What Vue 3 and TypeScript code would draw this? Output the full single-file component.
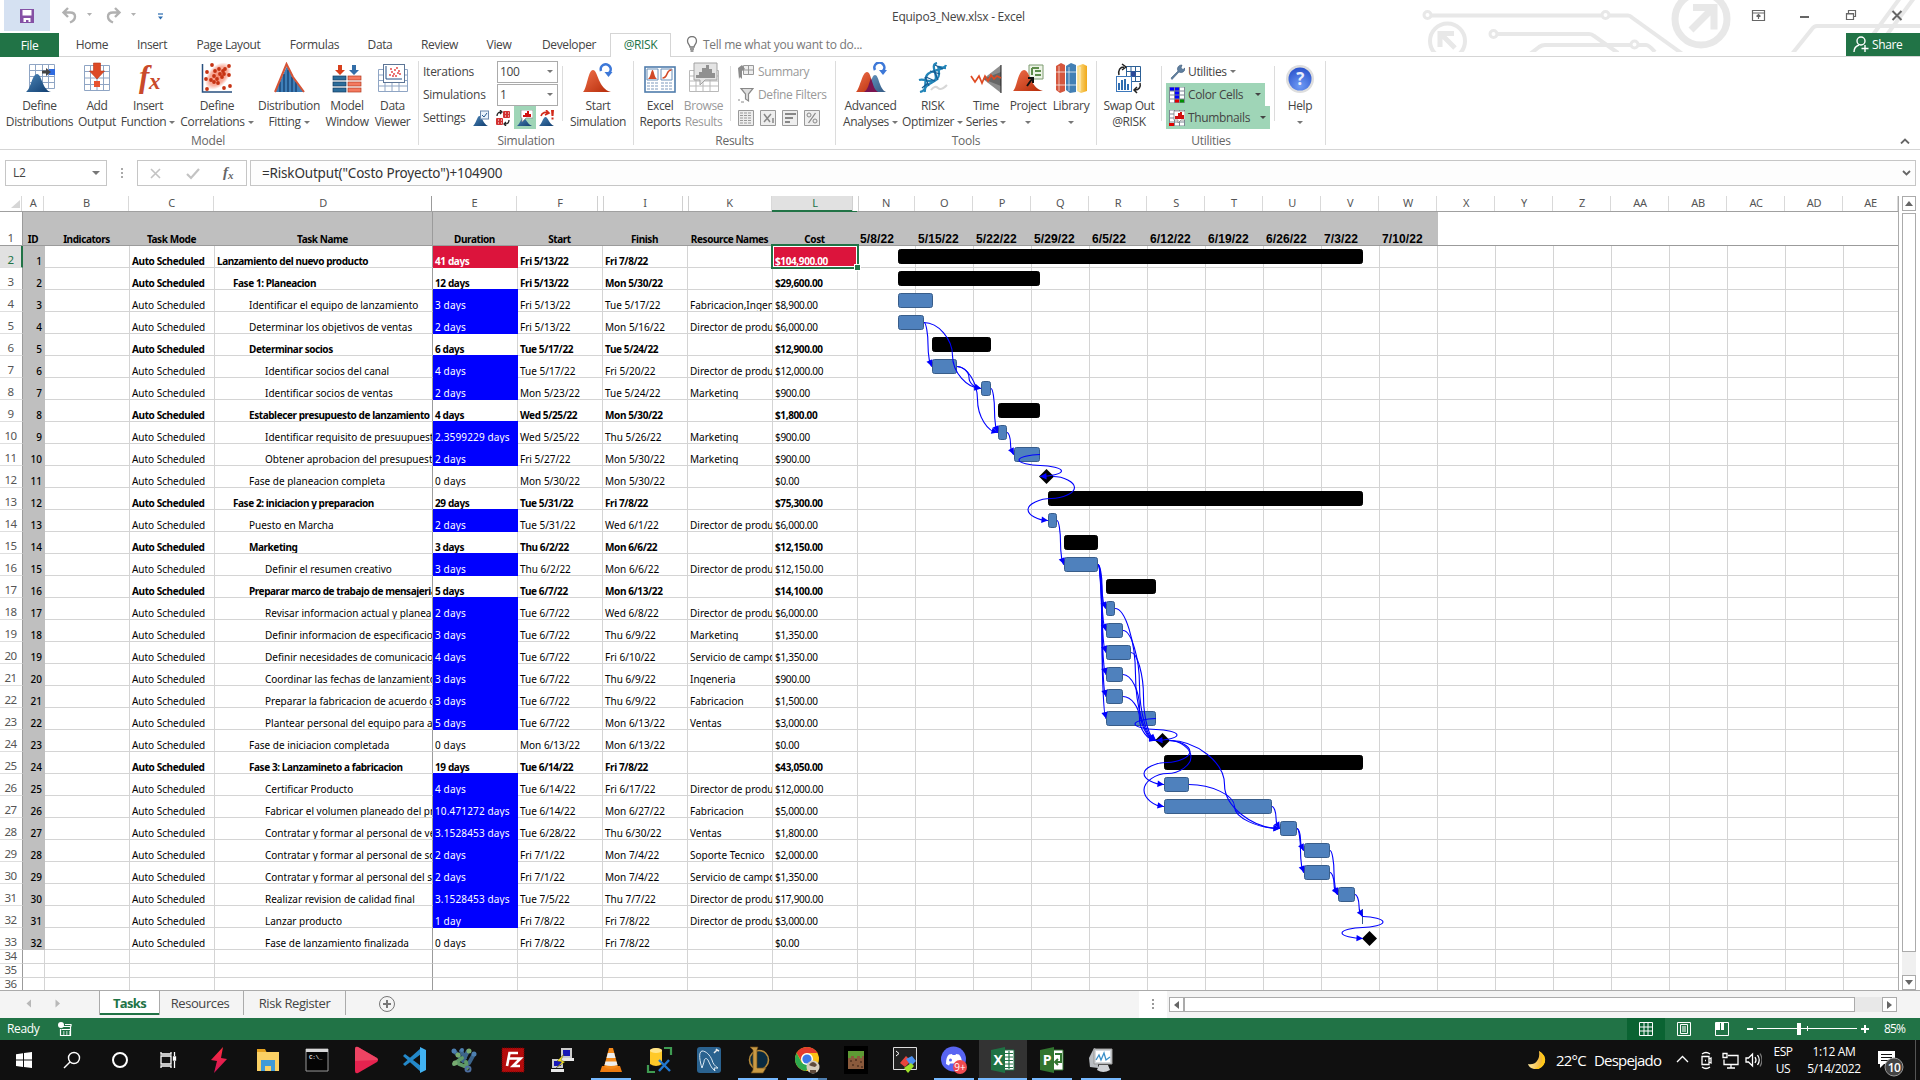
<script setup lang="ts">
type Button = { icon: string; a: string; b?: string; w: number; drop?: boolean; off?: boolean }
type Column = { name: string; w: number; head?: string; date?: boolean; tight?: boolean }
type Task = { level: number; name: string; dur: string; start: string; finish: string; res: string; cost: string; bold?: boolean; fill?: boolean }
type Pt = [number, number]

const tabs = [
  { t: 'Home', w: 66 }, { t: 'Insert', w: 54 }, { t: 'Page Layout', w: 99 }, { t: 'Formulas', w: 73 },
  { t: 'Data', w: 58 }, { t: 'Review', w: 61 }, { t: 'View', w: 58 }, { t: 'Developer', w: 82 },
]

const modelButtons: Button[] = [
  { icon: 'define', a: 'Define', b: 'Distributions', w: 75 },
  { icon: 'output', a: 'Add', b: 'Output', w: 40 },
  { icon: 'fx', a: 'Insert', b: 'Function', w: 62, drop: true },
  { icon: 'corr', a: 'Define', b: 'Correlations', w: 76, drop: true },
  { icon: 'fit', a: 'Distribution', b: 'Fitting', w: 68, drop: true },
  { icon: 'model', a: 'Model', b: 'Window', w: 48 },
  { icon: 'viewer', a: 'Data', b: 'Viewer', w: 43 },
]
const resultButtons: Button[] = [
  { icon: 'reports', a: 'Excel', b: 'Reports', w: 46 },
  { icon: 'browse', a: 'Browse', b: 'Results', w: 41, off: true },
]
const toolButtons: Button[] = [
  { icon: 'advanced', a: 'Advanced', b: 'Analyses', w: 59, drop: true },
  { icon: 'optimizer', a: 'RISK', b: 'Optimizer', w: 65, drop: true },
  { icon: 'series', a: 'Time', b: 'Series', w: 42, drop: true },
  { icon: 'project', a: 'Project', w: 42, drop: true },
  { icon: 'library', a: 'Library', w: 44, drop: true },
]

const columns: Column[] = [
  { name: 'A', w: 22, head: 'ID' }, { name: 'B', w: 85, head: 'Indicators' }, { name: 'C', w: 85, head: 'Task Mode' },
  { name: 'D', w: 218, head: 'Task Name' }, { name: 'E', w: 85, head: 'Duration' }, { name: 'F', w: 85, head: 'Start', tight: true },
  { name: 'I', w: 85, head: 'Finish', tight: true }, { name: 'K', w: 85, head: 'Resource Names' }, { name: 'L', w: 85, head: 'Cost', tight: true },
  ...['5/8/22', '5/15/22', '5/22/22', '5/29/22', '6/5/22', '6/12/22', '6/19/22', '6/26/22', '7/3/22', '7/10/22']
    .map((head, i) => ({ name: 'NOPQRSTUVW'[i], w: 58, head, date: true })),
  ...['X', 'Y', 'Z', 'AA', 'AB', 'AC', 'AD'].map((name) => ({ name, w: 58 })),
  { name: 'AE', w: 55 },
]

const dir = 'Director de produ'
const t = (level: number, name: string, dur: string, start: string, finish: string, res: string, cost: string, kind = ''): Task =>
  ({ level, name, dur, start, finish, res, cost, bold: kind === 'b', fill: kind === 'f' })
const tasks: Task[] = [
  t(0, 'Lanzamiento del nuevo producto', '41 days', 'Fri 5/13/22', 'Fri 7/8/22', '', '$104,900.00', 'b'),
  t(1, 'Fase 1: Planeacion', '12 days', 'Fri 5/13/22', 'Mon 5/30/22', '', '$29,600.00', 'b'),
  t(2, 'Identificar el equipo de lanzamiento', '3 days', 'Fri 5/13/22', 'Tue 5/17/22', 'Fabricacion,Ingen', '$8,900.00', 'f'),
  t(2, 'Determinar los objetivos de ventas', '2 days', 'Fri 5/13/22', 'Mon 5/16/22', dir, '$6,000.00', 'f'),
  t(2, 'Determinar socios', '6 days', 'Tue 5/17/22', 'Tue 5/24/22', '', '$12,900.00', 'b'),
  t(3, 'Identificar socios del canal', '4 days', 'Tue 5/17/22', 'Fri 5/20/22', dir, '$12,000.00', 'f'),
  t(3, 'Identificar socios de ventas', '2 days', 'Mon 5/23/22', 'Tue 5/24/22', 'Marketing', '$900.00', 'f'),
  t(2, 'Establecer presupuesto de lanzamiento', '4 days', 'Wed 5/25/22', 'Mon 5/30/22', '', '$1,800.00', 'b'),
  t(3, 'Identificar requisito de presuupuest', '2.3599229 days', 'Wed 5/25/22', 'Thu 5/26/22', 'Marketing', '$900.00', 'f'),
  t(3, 'Obtener aprobacion del presupuest', '2 days', 'Fri 5/27/22', 'Mon 5/30/22', 'Marketing', '$900.00', 'f'),
  t(2, 'Fase de planeacion completa', '0 days', 'Mon 5/30/22', 'Mon 5/30/22', '', '$0.00'),
  t(1, 'Fase 2: iniciacion y preparacion', '29 days', 'Tue 5/31/22', 'Fri 7/8/22', '', '$75,300.00', 'b'),
  t(2, 'Puesto en Marcha', '2 days', 'Tue 5/31/22', 'Wed 6/1/22', dir, '$6,000.00', 'f'),
  t(2, 'Marketing', '3 days', 'Thu 6/2/22', 'Mon 6/6/22', '', '$12,150.00', 'b'),
  t(3, 'Definir el resumen creativo', '3 days', 'Thu 6/2/22', 'Mon 6/6/22', dir, '$12,150.00', 'f'),
  t(2, 'Preparar marco de trabajo de mensajeria', '5 days', 'Tue 6/7/22', 'Mon 6/13/22', '', '$14,100.00', 'b'),
  t(3, 'Revisar informacion actual y planea', '2 days', 'Tue 6/7/22', 'Wed 6/8/22', dir, '$6,000.00', 'f'),
  t(3, 'Definir informacion de especificacio', '3 days', 'Tue 6/7/22', 'Thu 6/9/22', 'Marketing', '$1,350.00', 'f'),
  t(3, 'Definir necesidades de comunicacio', '4 days', 'Tue 6/7/22', 'Fri 6/10/22', 'Servicio de campo', '$1,350.00', 'f'),
  t(3, 'Coordinar las fechas de lanzamiento', '3 days', 'Tue 6/7/22', 'Thu 6/9/22', 'Ingeneria', '$900.00', 'f'),
  t(3, 'Preparar la fabricacion de acuerdo c', '3 days', 'Tue 6/7/22', 'Thu 6/9/22', 'Fabricacion', '$1,500.00', 'f'),
  t(3, 'Plantear personal del equipo para a', '5 days', 'Tue 6/7/22', 'Mon 6/13/22', 'Ventas', '$3,000.00', 'f'),
  t(2, 'Fase de iniciacion completada', '0 days', 'Mon 6/13/22', 'Mon 6/13/22', '', '$0.00'),
  t(2, 'Fase 3: Lanzamineto a fabricacion', '19 days', 'Tue 6/14/22', 'Fri 7/8/22', '', '$43,050.00', 'b'),
  t(3, 'Certificar Producto', '4 days', 'Tue 6/14/22', 'Fri 6/17/22', dir, '$12,000.00', 'f'),
  t(3, 'Fabricar el volumen planeado del pr', '10.471272 days', 'Tue 6/14/22', 'Mon 6/27/22', 'Fabricacion', '$5,000.00', 'f'),
  t(3, 'Contratar y formar al personal de ve', '3.1528453 days', 'Tue 6/28/22', 'Thu 6/30/22', 'Ventas', '$1,800.00', 'f'),
  t(3, 'Contratar y formar al personal de so', '2 days', 'Fri 7/1/22', 'Mon 7/4/22', 'Soporte Tecnico', '$2,000.00', 'f'),
  t(3, 'Contratar y formar al personal del se', '2 days', 'Fri 7/1/22', 'Mon 7/4/22', 'Servicio de campo', '$1,350.00', 'f'),
  t(3, 'Realizar revision de calidad final', '3.1528453 days', 'Tue 7/5/22', 'Thu 7/7/22', dir, '$17,900.00', 'f'),
  t(3, 'Lanzar producto', '1 day', 'Fri 7/8/22', 'Fri 7/8/22', dir, '$3,000.00', 'f'),
  t(3, 'Fase de lanzamiento finalizada', '0 days', 'Fri 7/8/22', 'Fri 7/8/22', '', '$0.00'),
]

/* Gantt geometry: x positions on the sheet, keyed by sheet row. */
const gx = 858
const bars: Record<number, [number, number]> = {
  2: [898, 1363], 3: [898, 1040], 4: [898, 933], 5: [898, 924], 6: [932, 991], 7: [932, 957], 8: [981, 991], 9: [998, 1040],
  10: [998, 1007], 11: [1014, 1040], 13: [1048, 1363], 14: [1048, 1057], 15: [1064, 1098], 16: [1064, 1098], 17: [1106, 1156],
  18: [1106, 1115], 19: [1106, 1123], 20: [1106, 1131], 21: [1106, 1123], 22: [1106, 1123], 23: [1106, 1156], 25: [1164, 1363],
  26: [1164, 1189], 27: [1164, 1272], 28: [1280, 1297], 29: [1304, 1330], 30: [1304, 1330], 31: [1338, 1355], 32: [1362, 1363],
}
const diamonds: [number, number][] = [[12, 1046.5], [24, 1162.5], [33, 1369.5]]
const rowTop = (r: number) => 3 + 22 * (r - 2)
const mid = (r: number) => rowTop(r) + 7.5
const barList = Object.entries(bars).map(([k, [a, b]]) => {
  const r = Number(k)
  return { x: a - gx, y: rowTop(r), w: b - a, black: tasks[r - 2].bold }
})

const quad = (a: Pt, b: Pt, horizontalFirst: boolean): Pt[] => {
  const [x0, y0] = a
  const [x1, y1] = b
  return horizontalFirst
    ? [a, [(x0 + x1) / 2, y0], [x1, (y0 + y1) / 2], b]
    : [a, [x0, (y0 + y1) / 2], [(x0 + x1) / 2, y1], b]
}
const link = (x0: number, r0: number, x1: number, r1: number, loop?: [number, number]) => {
  const a: Pt = [x0 - gx, mid(r0)]
  const b: Pt = [x1 - gx, mid(r1)]
  const segs: Pt[][] = []
  if (!loop) {
    const m: Pt = [(a[0] + b[0]) / 2, (a[1] + b[1]) / 2]
    segs.push(quad(a, m, true), quad(m, b, false))
  } else {
    const l = loop[0] - gx
    const n = loop[1] - gx
    const ym = (a[1] + b[1]) / 2
    const p1: Pt = [l, (a[1] + ym) / 2]
    const p2: Pt = [(l + n) / 2, ym]
    const p3: Pt = [n, (ym + b[1]) / 2]
    segs.push(quad(a, p1, true), quad(p1, p2, false), quad(p2, p3, true), quad(p3, b, false))
  }
  const d = `M${a.join(' ')}` + segs.map((s) => `C${s.slice(1).map((p) => p.join(' ')).join(' ')}`).join('')
  const last = segs[segs.length - 1]
  let back: Pt = last[0]
  for (let u = 0.98; u > 0; u -= 0.02) {
    const v = 1 - u
    const at = (i: number) => v * v * v * last[0][i] + 3 * v * v * u * last[1][i] + 3 * v * u * u * last[2][i] + u * u * u * last[3][i]
    back = [at(0), at(1)]
    if (Math.hypot(back[0] - b[0], back[1] - b[1]) >= 6) break
  }
  const angle = (Math.atan2(b[1] - back[1], b[0] - back[0]) * 180) / Math.PI
  return { d, head: `translate(${b[0]} ${b[1]}) rotate(${angle})` }
}
const links = [
  link(924, 5, 932, 7), link(924, 5, 981, 8), link(957, 7, 981, 8), link(957, 7, 998, 10), link(991, 8, 998, 10),
  link(1007, 10, 1014, 11), link(1040, 11, 1040, 12, [1019, 1061.5]), link(1053, 12, 1048, 14, [1074.5, 1028]),
  link(1057, 14, 1064, 16),
  ...[18, 19, 20, 21, 22, 23].map((r) => link(1098, 16, 1106, r)),
  ...[18, 19, 20, 21, 22].map((r) => link(bars[r][1], r, 1156, 24)),
  link(1156, 23, 1156, 24, [1135, 1177]), link(1169, 24, 1164, 26, [1190, 1144]), link(1169, 24, 1164, 27, [1191, 1144]),
  link(1169, 24, 1280, 28), link(1189, 26, 1280, 28), link(1272, 27, 1280, 28), link(1297, 28, 1304, 29), link(1297, 28, 1304, 30),
  link(1330, 29, 1338, 31), link(1330, 30, 1338, 31), link(1355, 31, 1363, 32), link(1363, 32, 1363, 33, [1383, 1342]),
]

const apps = [
  { i: 'bolt' }, { i: 'folder' }, { i: 'cmd' }, { i: 'play' }, { i: 'code' }, { i: 'molecule' }, { i: 'filezilla' }, { i: 'putty' },
  { i: 'vlc', on: true }, { i: 'dbtool' }, { i: 'mysql' }, { i: 'league', on: true }, { i: 'chrome', on: true, multi: true }, { i: 'minecraft' },
  { i: 'terminal' }, { i: 'discord', on: true }, { i: 'excel', on: true, active: true }, { i: 'proj', on: true }, { i: 'monitor', on: true },
]
</script>

<template>
  <div class="window">
    <svg class="defs" width="0" height="0" aria-hidden="true">
      <defs>
        <linearGradient id="gb" x1="0" y1="0" x2="1" y2="1"><stop offset="0" stop-color="#4d86b8" /><stop offset="1" stop-color="#0f3c6e" /></linearGradient>
        <linearGradient id="gr" x1="0" y1="0" x2="1" y2="1"><stop offset="0" stop-color="#f0704a" /><stop offset="1" stop-color="#b42a08" /></linearGradient>
        <linearGradient id="gy" x1="0" y1="0" x2="1" y2="0"><stop offset="0" stop-color="#ffe9a0" /><stop offset="1" stop-color="#f0a818" /></linearGradient>
        <linearGradient id="gp" x1="0" y1="0" x2="0" y2="1"><stop offset="0" stop-color="#ff2d3d" /><stop offset="1" stop-color="#d2145a" /></linearGradient>
        <radialGradient id="gh" cx=".5" cy=".8" r=".8"><stop offset="0" stop-color="#6f9cf5" /><stop offset="1" stop-color="#2a52cc" /></radialGradient>
        <radialGradient id="gc"><stop offset="0" stop-color="#f58a72" /><stop offset=".7" stop-color="#f9b2a2" /><stop offset="1" stop-color="#fff" /></radialGradient>
        <symbol id="define" viewBox="0 0 32 32">
          <path d="M5.500 2.500h25v24h-25zM11.500 2.500v24M18.500 2.500v24M24.500 2.500v24M5.500 8.500h25M5.500 14.500h25M5.500 20.500h25" fill="#fff" stroke="#8fa5c4" />
          <rect x="25" y="7" width="6" height="6" fill="#2f6be0" /><path d="M18 8.500h4V6l5 4-5 4v-2.500h-4z" fill="#444" />
          <path d="M2 30c5-3 6-18 11-18s5 16 14 18z" fill="url(#gb)" />
        </symbol>
        <symbol id="output" viewBox="0 0 32 32">
          <path d="M3.500 3.500h25v25h-25zM9.500 3.500v25M16 3.500v25M22.500 3.500v25M3.500 9.500h25M3.500 16h25M3.500 22.500h25" fill="#fff" stroke="#8fa5c4" />
          <path d="M12.500 1h7v8h4l-7.500 8-7.500-8h4z" fill="#dd4a26" stroke="#b93817" stroke-width=".6" /><rect x="13" y="19" width="6" height="6" fill="#e8532f" />
        </symbol>
        <symbol id="fx" viewBox="0 0 32 32"><text x="7" y="25" class="fxg">f</text><text x="17" y="27" class="fxs">x</text></symbol>
        <symbol id="corr" viewBox="0 0 32 32">
          <path d="M1.500 2v28H31" fill="none" stroke="#28507f" stroke-width="1.500" /><ellipse cx="17" cy="14" rx="16" ry="10" transform="rotate(-48 17 14)" fill="url(#gc)" />
          <g fill="#c63313"><circle v-for="(p, i) in [[11,3],[28,4],[6,10],[5,17],[6,27],[23,26],[29,24],[28,13],[18,7],[14,9],[22,9],[19,12],[24,7],[13,14],[10,18],[16,17],[21,15],[13,20],[17,21],[23,12]]" :key="i" :cx="p[0]" :cy="p[1]" r="1.900" /></g>
        </symbol>
        <symbol id="fit" viewBox="0 0 32 32"><path d="M2 30L14 4l6 12 11 14z" fill="#3f7fb8" /><path d="M7 30V20M11 30V12M15 30V8M19 30V15M23 30V20" stroke="#163f70" stroke-width="1.300" /><path d="M2 30L13.500 2 20 15l11 15" fill="none" stroke="#d55436" stroke-width="2" /></symbol>
        <symbol id="model" viewBox="0 0 32 32">
          <path d="M7 3h4v5h3l-5 5-5-5h3z" fill="#d8401c" /><path d="M21 3h4v5h3l-5 5-5-5h3z" fill="#336ea8" />
          <g v-for="y in [14, 20, 26]" :key="y"><rect x="2" :y="y" width="13" height="4" fill="#2c6d9b" stroke="#12395f" stroke-width=".7" /><rect x="17" :y="y" width="13" height="4" fill="#f47a60" stroke="#b23a20" stroke-width=".7" /></g>
        </symbol>
        <symbol id="viewer" viewBox="0 0 32 32">
          <path d="M1.500 7.500h29v22h-29zM8 7.500v22M15 7.500v22M22 7.500v22M1.500 13h29M1.500 18.500h29M1.500 24h29" fill="#fff" stroke="#8fa5c4" /><rect x="6.500" y="2.500" width="21" height="18" fill="#fff" stroke="#5d7596" />
          <path d="M9 4v13h16" fill="none" stroke="#234f85" /><g fill="#e03535"><circle v-for="(p, i) in [[13,13],[15,10],[17,12],[18,8],[20,6],[22,9],[19,14],[14,7],[23,12],[16,14],[21,11]]" :key="i" :cx="p[0]" :cy="p[1]" r=".9" /></g>
        </symbol>
        <symbol id="start" viewBox="0 0 32 32"><path d="M1 30c4-3 5-22 10-22s5 19 18 22z" fill="url(#gr)" /><path d="M19 9a5 5 0 1 1 8 2" fill="none" stroke="#3d78d8" stroke-width="2.600" /><path d="M22.500 10h8l-4 5z" fill="#3d78d8" /></symbol>
        <symbol id="reports" viewBox="0 0 32 32">
          <rect x="1" y="5" width="30" height="25" fill="#fff" stroke="#4f7cac" stroke-width="1.600" /><path d="M3 18h11V7H3zM17 18h11V7H17z" fill="#fff" stroke="#6a8fb8" /><path d="M4 17c3-2 3-9 4.500-9s1.500 7 4.500 9z" fill="#d24a28" /><path d="M18.500 16c6 0 3-8 9-8" fill="none" stroke="#d24a28" stroke-width="1.600" />
          <path d="M3 21h11M3 24h11M3 27h11M17 21h11M17 24h11M17 27h11" stroke="#7c99bd" stroke-dasharray="3 1" />
        </symbol>
        <symbol id="browse" viewBox="0 0 32 32"><path d="M1.500 8.500h29v21h-29zM8 8.500v21M15 8.500v21M22 8.500v21M1.500 14h29M1.500 19h29M1.500 24h29" fill="#fff" stroke="#b9b9b9" /><path d="M6 1h23v17H17l-5 5v-5H6z" fill="#e4e4e4" stroke="#a2a2a2" /><path d="M8 16v-3h3v-3h3V6h4V3h3v4h3v4h3v5z" fill="#909090" /></symbol>
        <symbol id="advanced" viewBox="0 0 32 32"><path d="M1 30c4-3 6-20 11-20s4 17 11 20z" fill="url(#gr)" /><path d="M11 30c5-4 5-17 9-17s4 14 11 17z" fill="url(#gb)" opacity=".85" /><path d="M9 30c4-2 5-9 7-14 2 6 3 12 7 14z" fill="#7b1450" /><path d="M20 8a5 5 0 1 1 8 1" fill="none" stroke="#3d78d8" stroke-width="2.600" /><path d="M24 8h8l-4 5z" fill="#3d78d8" /></symbol>
        <symbol id="optimizer" viewBox="0 0 32 32"><path d="M14 28q4-5 7-2t9-3" fill="none" stroke="#d7d7d7" stroke-width="2" /><path d="M3 30C12 28 6 19 10 13S27 9 29 3M2 18c6-2 12 4 16 0S12 3 20 1M8 30C6 20 22 22 22 12S18 5 29 6" fill="none" stroke="#2385b8" stroke-width="2.300" /><path d="M5 26l6-5M9 15l9 4M13 9l10 3M18 3l8 4M12 24l-4-9M17 8l4 10" stroke="#155a92" stroke-width="1.200" /></symbol>
        <symbol id="series" viewBox="0 0 32 32"><path d="M13 17L31 3v28z" fill="#8d8d8d" /><path d="M13 17L31 10v14z" fill="#666" /><path d="M31 3v28" stroke="#222" /><path d="M1 14l4 6 4-6 3 7 3-7 3 5 3-6 3 4 3-3 4 2" fill="none" stroke="#df4a22" stroke-width="1.700" /></symbol>
        <symbol id="project" viewBox="0 0 32 32"><path d="M17 3h14v14H17z" fill="#edf4e7" stroke="#7c9b70" /><path d="M20 6h7M20 6v7M23 9h6M23 13h6" fill="none" stroke="#5f8d4c" stroke-width="2" /><path d="M1 29c4-3 5-21 11-21s6 18 19 21z" fill="url(#gr)" /><path d="M15 24l5-7M16 16h5v5" fill="none" stroke="#111" stroke-width="2" /></symbol>
        <symbol id="library" viewBox="0 0 32 32"><path d="M1 4l5-3 4 2v26l-5 2-4-3z" fill="#d5563d" /><path d="M11 4l5-3 5 2v27l-6 1-4-3z" fill="#4380b5" /><path d="M22 4l6-2 4 2v25l-6 2-4-2z" fill="url(#gy)" /><path d="M4 4v25M14 5v24M25 5v24" stroke="#fff" stroke-opacity=".6" /><path d="M1 10h9M1 23h9M11 10h10M11 23h10" stroke="#fff" stroke-opacity=".7" /></symbol>
        <symbol id="swap" viewBox="0 0 32 32"><path d="M13.500 4.500h14v15h-14zM18 4.500v15M22.500 4.500v15M13.500 9.500h14M13.500 14.500h14" fill="#fff" stroke="#2c6096" /><rect x="18" y="9.500" width="4.500" height="5" fill="#2c4a9a" /><rect x="3.500" y="14.500" width="15" height="15" fill="#fff" stroke="#3d78bb" /><path d="M6 28v-7M9 28V18M12 28V17M15 28v-6" stroke="#2e6cb0" stroke-width="2" /><path d="M6 13c-1-5 1-8 5-8M9 2l4 3-4 3M27 21c1 4-1 7-5 7M24 25l-3 3 3 3" fill="none" stroke="#222" stroke-width="1.500" /></symbol>
        <symbol id="help" viewBox="0 0 32 32"><circle cx="16" cy="17" r="14" fill="#dedede" /><circle cx="16" cy="17" r="11.500" fill="url(#gh)" /><text x="16" y="23" text-anchor="middle" class="qm">?</text></symbol>
        <symbol id="s1" viewBox="0 0 16 16"><path d="M0 16c3-2 4-10 6.500-10S10 14 15 16z" fill="url(#gb)" /><rect x="7.500" y="1" width="8" height="8" fill="#eaf2fb" stroke="#6a86ab" /><path d="M9 5l2 2 3-4" fill="none" stroke="#26588e" /></symbol>
        <symbol id="s2" viewBox="0 0 16 16"><rect x="8" y="1" width="7" height="7" rx="1" fill="#d23232" /><rect x="1" y="8" width="7" height="7" rx="1" fill="#d23232" /><path d="M10 3h1M13 3h1M10 6h1M13 6h1M3 10h1M6 10h1M3 13h1M6 13h1" stroke="#fff" /><path d="M2 6c0-3 2-4 4-4M5 0l2 2-2 2M14 10c0 3-2 4-4 4M11 12l-2 2 2 2" fill="none" stroke="#222" stroke-width="1.300" /></symbol>
        <symbol id="s3" viewBox="0 0 16 16"><path d="M0 16c3-2 4-8 6.500-8S10 14 15 16z" fill="url(#gb)" /><path d="M4 0h12v8H9l-4 4V8H4z" fill="#fff" stroke="#888" stroke-width=".7" /><path d="M6 7V5h2V3h2V1h2v3h2v3z" fill="#d01010" /></symbol>
        <symbol id="s4" viewBox="0 0 16 16"><path d="M0 16c3-2 4-9 6.500-9S10 14 15 16z" fill="url(#gb)" /><path d="M2 6c1-4 5-4 7-3M7 0l3 3-4 2" fill="none" stroke="#d22a1a" stroke-width="1.600" /><path d="M12 0h3l-.5 6h-2zM12.500 7.500h2v2h-2z" fill="#d22a1a" /></symbol>
        <symbol id="summary" viewBox="0 0 16 16"><path d="M5.500 1.500h10v9h-10zM5.500 6h10M10.500 1.500v9" fill="#eee" stroke="#999" /><path d="M0 4l4-3 3 4-3 2v8l-2-2-1 2z" fill="#8b8b8b" /></symbol>
        <symbol id="funnel" viewBox="0 0 16 16"><path d="M3 1.500h12L10.500 7v7l-3-2V7z" fill="#ddd" stroke="#888" stroke-width="1.200" /><path d="M0 13h2M3 15h3" stroke="#888" /></symbol>
        <symbol id="wrench" viewBox="0 0 16 16"><path d="M2 14L9 7a4 4 0 0 1 4-6l-1 3 2 1.500L16 4a4 4 0 0 1-6 4l-7 7.500z" fill="#5f7f9f" stroke="#3f5d7c" stroke-width=".6" /></symbol>
        <symbol id="cells" viewBox="0 0 16 16"><path d="M0 0h16v16H0z" fill="#7d8893" /><path v-for="i in 12" :key="i" :d="`M${((i - 1) % 3) * 5 + 1} ${Math.floor((i - 1) / 3) * 4 + .5}h4v3h-4z`" :fill="[1,2,5,8].includes(i) ? '#00f' : i === 11 ? '#e00000' : i === 12 ? '#009000' : '#fff'" /></symbol>
        <symbol id="thumb" viewBox="0 0 16 16"><path d="M0 0h16v16H0z" fill="#7d8893" /><path v-for="i in 12" :key="i" :d="`M${((i - 1) % 3) * 5 + 1} ${Math.floor((i - 1) / 3) * 4 + .5}h4v3h-4z`" fill="#fff" /><path d="M5 1h11v9h-4l-3 3v-3H5z" fill="#fff" stroke="#777" stroke-width=".7" /><path d="M6 9V6h3V3h2V2h2v3h2v4z" fill="#d01010" /><path d="M0 13h5v3H0z" fill="#e00000" /></symbol>

        <symbol id="bolt" viewBox="0 0 28 28"><path d="M18 1L6 14l6 1-3 12L22 13l-6-1z" fill="url(#gp)" /></symbol>
        <symbol id="folder" viewBox="0 0 28 28"><path d="M3 3h8l2 4H3z" fill="#e4a220" /><path d="M3 6h22v19H3z" fill="#fad064" /><path d="M7 25V14h14v11h-4v-5h-6v5z" fill="#3f9ad8" /></symbol>
        <symbol id="cmd" viewBox="0 0 28 28"><path d="M3 3h22v22H3z" fill="#050505" stroke="#999" /><path d="M3 3h22v3H3z" fill="#d8d8d8" /><text x="6" y="13" class="cmdt">C:\_</text></symbol>
        <symbol id="play" viewBox="0 0 28 28"><path d="M3 3q0-3 3-2l19 11q2 2 0 4L6 27q-3 1-3-2z" fill="#e6234f" /><path d="M3 3q0-3 3-2l19 11q1 1 1 2L3 15z" fill="#f0526c" opacity=".7" /></symbol>
        <symbol id="code" viewBox="0 0 28 28"><path d="M20 2v24L2 10l2-2 16 12V8L4 20l-2-2z" fill="#2489ca" /><path d="M19 1l6 3v20l-6 3z" fill="#41b2f2" /></symbol>
        <symbol id="molecule" viewBox="0 0 28 28"><g fill="none" stroke="#3c648a" stroke-width="4" stroke-linecap="round"><path d="M4 5l5 5M11 5l4 7M18 5l-5 10M24 8l-5 9" /><path d="M4 18l8-6M9 18l5 2M16 16l1 6" stroke="#5f9a68" /></g><g fill="#4d7fb0"><circle cx="4" cy="5" r="2.500" /><circle cx="12" cy="4" r="2" /><circle cx="24" cy="8" r="2.500" /></g><g fill="#78ab70"><circle cx="19" cy="5" r="2.500" /><circle cx="5" cy="17" r="2.500" /><circle cx="8" cy="9" r="2.500" /></g><circle cx="18" cy="23" r="2.500" fill="none" stroke="#4d6fa0" stroke-width="2" /></symbol>
        <symbol id="filezilla" viewBox="0 0 28 28"><path d="M3 2h22v24H3z" fill="#b30c0c" stroke="#7a0000" stroke-dasharray="1 1" /><path d="M8 20L10.500 7H19M9.500 12.500h6M15 12.500h6.500L14 20h7" fill="none" stroke="#fff" stroke-width="2.600" /></symbol>
        <symbol id="putty" viewBox="0 0 28 28"><path d="M13 2h11v10H13zM4 13h11v9H4z" fill="#ccc" /><path d="M15 4h7v6h-7zM6 15h7v5H6z" fill="#1818b8" /><path d="M13 12h13v3H13zM3 23h13v3H3z" fill="#e8e8e8" /><path d="M16 8l-7 7 5 1-6 6 9-6-4-2z" fill="#f6e21b" stroke="#333" stroke-width=".4" /></symbol>
        <symbol id="vlc" viewBox="0 0 28 28"><path d="M5 20h18l2 6H3z" fill="#ee7b10" /><path d="M12 2h4l5 19q-7 4-14 0z" fill="#f58a1a" /><path d="M10.800 7h6.400l1.300 5h-9zM8.500 15.500h11l1 3.500q-6.500 2-13 0z" fill="#eee" /></symbol>
        <symbol id="dbtool" viewBox="0 0 28 28"><path d="M4 4q6-4 12 0v14q-6 4-12 0z" fill="#ffc928" /><ellipse cx="10" cy="4.500" rx="6" ry="2.500" fill="#ffe58a" /><path d="M18 2h7v7M2 19v7h7" fill="none" stroke="#3f9c52" stroke-width="2.200" /><path d="M13 14l11 11M23 14L13 25" stroke="#2278d0" stroke-width="2.400" /></symbol>
        <symbol id="mysql" viewBox="0 0 28 28"><rect x="2" y="1" width="24" height="26" rx="3" fill="#2a628f" /><path d="M7 22C5 16 3 6 7 5c4 0 8 4 10 9 1 4 3 6 6 8l-4 0 1 3c-4-3-5-7-7-11-2-3-4-1-4 2z" fill="none" stroke="#dbe8f2" stroke-width="1" /><path d="M19 7l3-3M22 4l2 1M22 4l-1-1" fill="none" stroke="#eee" stroke-width="1.500" /></symbol>
        <symbol id="league" viewBox="0 0 28 28"><circle cx="15" cy="14" r="9.500" fill="#0a2b40" stroke="#b58a3a" stroke-width="1.600" /><path d="M6 1h8l-1 3v18h9l-3 5H7l2-3V4z" fill="#c99a44" stroke="#6a4a18" stroke-width=".7" /></symbol>
        <symbol id="chrome" viewBox="0 0 28 28"><circle cx="14" cy="13" r="12" fill="#fbc116" /><path d="M3.600 7A12 12 0 0 1 24.400 7H14a6 6 0 0 0-5.500 8z" fill="#e33b2e" /><path d="M3.600 7A12 12 0 0 0 13 25l5-8-9 0z" fill="#2da94f" /><circle cx="14" cy="13" r="6" fill="#fff" /><circle cx="14" cy="13" r="4.600" fill="#3b78e7" /><circle cx="20" cy="21" r="6.500" fill="#d6cdbd" /><path d="M16 19q4-6 8 0l-2 2-4-1zM17 24h6v3h-6z" fill="#5e4a3c" /></symbol>
        <symbol id="minecraft" viewBox="0 0 28 28"><path d="M2 0h24v28H2z" fill="#000" /><path d="M6 5h16v18H6z" fill="#8a5a3c" /><path d="M6 5h16v5h-2v2h-2v-2h-3v2h-3v-2h-3v2H6z" fill="#5e9a34" /><path d="M8 14h2v2H8zM13 13h2v2h-2zM18 15h2v2h-2zM10 18h2v2h-2zM15 19h2v2h-2zM19 20h2v2h-2z" fill="#5f3b26" /></symbol>
        <symbol id="terminal" viewBox="0 0 28 28"><path d="M2.500 1.500h23v22h-23z" fill="#222" stroke="#ddd" /><path d="M5 5l3 2.500L5 10" fill="none" stroke="#fff" /><path d="M9 17l6-7 5 5-6 6z" fill="#e8443c" /><path d="M15 13l6-3 4 5-5 5z" fill="#4a8ff0" /><path d="M13 22l7-5 3 3-6 7z" fill="#9ee02a" /></symbol>
        <symbol id="discord" viewBox="0 0 28 28"><circle cx="13.500" cy="13" r="12.500" fill="#5865f2" /><path d="M6 18c0-5 1-8 3-9.500l3-.5.500 1h3l.5-1 3 .5c2 2 3 5 3 9l-4 2-1-2h-7l-1 2z" fill="#fff" /><circle cx="10.500" cy="14" r="1.500" fill="#5865f2" /><circle cx="20" cy="21" r="7" fill="#f04a50" /><text x="20" y="24.500" text-anchor="middle" class="nine">9+</text></symbol>
        <symbol id="excel" viewBox="0 0 28 28"><path d="M14 4h11v20H14z" fill="#fff" stroke="#217346" /><path d="M16 7.500h8M16 11h8M16 14.500h8M16 18h8M16 21.500h8M20 5v18" stroke="#217346" stroke-width="1.200" /><path d="M2 4l14-3v26L2 24z" fill="#1f7244" /><text x="9" y="19" text-anchor="middle" class="app">X</text></symbol>
        <symbol id="proj" viewBox="0 0 28 28"><path d="M14 4h11v20H14z" fill="#fff" stroke="#31752f" /><path d="M17 8h6v8h-6M20 13l-3 3 3 3" fill="none" stroke="#31752f" stroke-width="2" /><path d="M2 4l14-3v26L2 24z" fill="#31752f" /><text x="9" y="19" text-anchor="middle" class="app">P</text></symbol>
        <symbol id="monitor" viewBox="0 0 28 28"><path d="M2 12l5-10 4 2v18l-8-1z" fill="#b9bdc2" /><path d="M7 3h18v15H7z" fill="#d4d8dc" stroke="#999" /><path d="M9 5h14v11H9z" fill="#fff" /><path d="M9 14l3-5 2 5 3-7 2 7 4-3" fill="none" stroke="#3a8fc8" stroke-width="1.300" /><path d="M12 19h9l2 5q-7 4-13 0z" fill="#cfd2d6" /></symbol>
      </defs>
    </svg>

    <header class="title">
      <svg class="circuit" width="500" height="52" viewBox="1420 0 500 52" fill="none" stroke="#e8e8e8" stroke-width="4">
        <circle cx="1427.500" cy="15" r="3.500" stroke-width="3" /><path d="M1431 15.500h170" /><circle cx="1605.500" cy="15" r="3.500" stroke-width="3" /><path d="M1609 15.500h19q2 0 4 2l50 36" />
        <circle cx="1447.500" cy="41" r="17.500" stroke-width="4" /><path d="M1455 48l-14-14M1440 47V33.500h14" stroke-width="5" />
        <circle cx="1493.500" cy="34" r="3.500" stroke-width="3" /><path d="M1497 34h92q3 0 5 2l24 17M1530 54l9-7q3-2 6-2h86M1637 45h9q3 0 9 7" /><circle cx="1634.500" cy="44.500" r="3.500" stroke-width="3" />
        <circle cx="1701" cy="19" r="26" stroke-width="7" /><path d="M1691 30l20-20M1693 7.500h21v22" stroke-width="7" />
        <path d="M1792 54l20-25q2-3 5-3h103M1872 36l28-38M1886 36l28-38" />
      </svg>
      <div class="save"><svg width="16" height="16" viewBox="0 0 16 16"><path d="M1 1h14v14H1z" fill="#8551a5" /><path d="M3.500 2h9v5.500h-9zM4.500 10h7v4h-2v-2h-2.500v2H4.500z" fill="#fff" /></svg></div>
      <svg class="quick" width="110" height="24" viewBox="0 0 110 24" fill="none" stroke="#b1b1b1" stroke-width="2.400">
        <path d="M9 5L4.500 9.500 9 14M5 9.500h6q5 0 5 4t-5 6" /><path d="M28 10h5l-2.500 3z" fill="#b1b1b1" stroke="none" />
        <path d="M56 5l4.500 4.500L56 14M60 9.500h-6q-5 0-5 4t5 6" /><path d="M72 10h5l-2.500 3z" fill="#b1b1b1" stroke="none" />
        <path d="M99 11h5" stroke="#2b6cb0" stroke-width="1.200" /><path d="M99 13.500h5l-2.500 3z" fill="#2b6cb0" stroke="none" />
      </svg>
      <span class="doc">Equipo3_New.xlsx - Excel</span>
      <svg class="winctl" width="170" height="20" viewBox="0 0 170 20" fill="none" stroke="#666" stroke-width="1.200">
        <path d="M7.500 5.500h12v10h-12zM7.500 8h12M13.500 14V9.500M11.500 11.500l2-2 2 2" /><path d="M55 12h9" stroke-width="2" /><path d="M101.500 8.500h7v6h-7zM103.500 8V5.500h7v6h-2M101 9h8" /><path d="M147.500 6l9 9M156.500 6l-9 9" stroke-width="2" />
      </svg>
    </header>

    <nav class="tabs">
      <span class="file">File</span>
      <span v-for="x in tabs" :key="x.t" class="tab" :style="{ width: x.w + 'px' }">{{ x.t }}</span>
      <span class="tab current">@RISK</span>
      <svg class="bulb" width="12" height="16" viewBox="0 0 12 16" fill="none" stroke="#777" stroke-width="1.300"><path d="M4 11c0-2-2.500-3-2.500-6a4.500 4.500 0 0 1 9 0c0 3-2.500 4-2.500 6zM4 13h4M4.500 15h3" /></svg>
      <span class="tell">Tell me what you want to do...</span>
      <span class="share"><svg width="16" height="17" viewBox="0 0 16 17" fill="none" stroke="#fff" stroke-width="1.400"><circle cx="8" cy="5" r="4" /><path d="M1 16c0-4 2-6 5-7M12 9v7M8.500 12.500h7" /></svg>Share</span>
    </nav>

    <section class="ribbon">
      <div class="group g-model">
        <div class="body">
          <div v-for="b in modelButtons" :key="b.icon" class="btn" :style="{ width: b.w + 'px' }">
            <svg width="32" height="32"><use :href="'#' + b.icon" /></svg><span>{{ b.a }}</span><span>{{ b.b }}<i v-if="b.drop" class="dd" /></span>
          </div>
        </div>
        <div class="cap">Model</div>
      </div>
      <div class="group g-sim">
        <div class="body">
          <div class="lines">
            <div class="ln"><span>Iterations</span><div class="combo">100<i class="dd" /></div></div>
            <div class="ln"><span>Simulations</span><div class="combo">1<i class="dd" /></div></div>
            <div class="ln set"><span>Settings</span>
              <div class="mini"><svg width="16" height="16"><use href="#s1" /></svg></div><div class="mini"><svg width="16" height="16"><use href="#s2" /></svg></div>
              <div class="mini lit"><svg width="16" height="16"><use href="#s3" /></svg></div><div class="mini"><svg width="16" height="16"><use href="#s4" /></svg></div>
            </div>
          </div>
          <div class="rule" />
          <div class="btn start"><svg width="32" height="32"><use href="#start" /></svg><span>Start</span><span>Simulation</span></div>
        </div>
        <div class="cap">Simulation</div>
      </div>
      <div class="group g-res">
        <div class="body">
          <div v-for="b in resultButtons" :key="b.icon" class="btn" :class="{ off: b.off }" :style="{ width: b.w + 'px' }">
            <svg width="32" height="32"><use :href="'#' + b.icon" /></svg><span>{{ b.a }}</span><span>{{ b.b }}</span>
          </div>
          <div class="rule" />
          <div class="lines off rl">
            <div class="ln"><svg width="16" height="16"><use href="#summary" /></svg>Summary</div>
            <div class="ln"><svg width="16" height="16"><use href="#funnel" /></svg>Define Filters</div>
            <div class="ln four">
              <svg width="16" height="16" viewBox="0 0 16 16"><path d="M.5 .5h15v15H.5z" fill="#eee" stroke="#999" /><path d="M2 3h12M2 5.500h12M2 8h12M2 10.500h12M2 13h12" stroke="#999" stroke-dasharray="3 1" /></svg>
              <svg width="16" height="16" viewBox="0 0 16 16"><path d="M.5 .5h15v15H.5z" fill="#eee" stroke="#999" /><path d="M4 4l6 8M11 4l-7 8M13 8v5" stroke="#888" stroke-width="1.500" /></svg>
              <svg width="16" height="16" viewBox="0 0 16 16"><path d="M.5 .5h15v15H.5z" fill="#eee" stroke="#999" /><path d="M3 4h11M3 8h8M3 12h5" stroke="#888" stroke-width="2" /></svg>
              <svg width="16" height="16" viewBox="0 0 16 16"><path d="M.5 .5h15v15H.5z" fill="#eee" stroke="#999" /><path d="M11.500 3l-7 10" stroke="#888" stroke-width="1.300" /><circle cx="5" cy="5" r="2" fill="none" stroke="#888" /><circle cx="11" cy="11" r="2" fill="none" stroke="#888" /></svg>
            </div>
          </div>
        </div>
        <div class="cap">Results</div>
      </div>
      <div class="group g-tools">
        <div class="body">
          <div v-for="b in toolButtons" :key="b.icon" class="btn" :style="{ width: b.w + 'px' }">
            <svg width="32" height="32"><use :href="'#' + b.icon" /></svg><span>{{ b.a }}</span><span :class="{ only: !b.b }">{{ b.b }}<i v-if="b.drop" class="dd" /></span>
          </div>
        </div>
        <div class="cap">Tools</div>
      </div>
      <div class="group g-util">
        <div class="body">
          <div class="btn swap"><svg width="32" height="32"><use href="#swap" /></svg><span>Swap Out</span><span>@RISK</span></div>
          <div class="rule" />
          <div class="lines ul">
            <div class="ln"><svg width="16" height="16"><use href="#wrench" /></svg>Utilities<i class="dd" /></div>
            <div class="ln lit c1"><svg width="16" height="16"><use href="#cells" /></svg>Color Cells<i class="dd" /></div>
            <div class="ln lit c2"><svg width="16" height="16"><use href="#thumb" /></svg>Thumbnails<i class="dd" /></div>
          </div>
          <div class="rule" />
          <div class="btn helpb"><svg width="32" height="32"><use href="#help" /></svg><span>Help</span><span class="only"><i class="dd" /></span></div>
        </div>
        <div class="cap">Utilities</div>
      </div>
      <svg class="fold" width="10" height="6" viewBox="0 0 10 6"><path d="M1 5.500l4-4 4 4" fill="none" stroke="#666" stroke-width="1.800" /></svg>
    </section>

    <section class="formula">
      <div class="fbox name">L2<i class="dd" /></div>
      <div class="grip"><i /><i /><i /></div>
      <div class="fbox ops">
        <svg width="110" height="24" viewBox="0 0 110 24" fill="none"><path d="M13 8l9 9M22 8l-9 9" stroke="#c3c3c3" stroke-width="1.600" /><path d="M49 13l4 4 8-9" stroke="#c3c3c3" stroke-width="2.200" /><text x="85" y="16" class="fxb">f</text><text x="90" y="18" class="fxc">x</text></svg>
      </div>
      <div class="fbox input">=RiskOutput("Costo Proyecto")+104900<svg width="9" height="6" viewBox="0 0 9 6"><path d="M1 1l3.500 3.500L8 1" fill="none" stroke="#666" stroke-width="1.800" /></svg></div>
    </section>

    <section class="sheetwrap">
      <div class="sheet">
        <div class="row heads">
          <div class="corner"><svg width="9" height="8"><path d="M9 0v8H0z" fill="#d6d6d6" /></svg></div>
          <div v-for="c in columns" :key="c.name" class="ch" :class="[{ sel: c.name === 'L', tight: c.tight, fz: c.name === 'D' }]" :style="{ width: c.w + 'px' }">{{ c.name }}</div>
        </div>
        <div class="row first">
          <div class="rh">1</div>
          <div v-for="c in columns" :key="c.name" class="hc" :class="{ gray: c.head, date: c.date, fz: c.name === 'D' }" :style="{ width: c.w + 'px' }">{{ c.head }}</div>
        </div>
        <div v-for="(k, i) in tasks" :key="i" class="row task" :class="{ bold: k.bold }">
          <div class="rh" :class="{ cur: i === 0 }">{{ i + 2 }}</div>
          <div class="c id">{{ i + 1 }}</div>
          <div class="c w85" />
          <div class="c w85 mode">Auto Scheduled</div>
          <div class="c taskname fz" :class="'lv' + k.level">{{ k.name }}</div>
          <div class="c w85 dur" :class="{ blue: k.fill, red: i === 0 }">{{ k.dur }}</div>
          <div class="c w85">{{ k.start }}</div>
          <div class="c w85">{{ k.finish }}</div>
          <div class="c w85">{{ k.res }}</div>
          <div class="c w85 cost" :class="{ red: i === 0 }">{{ k.cost }}</div>
          <div v-for="n in 17" :key="n" class="c w58" />
          <div class="c w55" />
        </div>
        <div v-for="r in [34, 35, 36]" :key="r" class="row blank">
          <div class="rh">{{ r }}</div>
          <div v-for="c in columns" :key="c.name" class="c" :class="{ fz: c.name === 'D' }" :style="{ width: c.w + 'px' }" />
        </div>
        <svg class="gantt" width="600" height="720" viewBox="0 0 600 720">
          <template v-for="(b, i) in barList" :key="i">
            <rect v-if="b.w > 1" :x="b.x + .5" :y="b.y + .5" :width="b.w - 1" height="14" rx="2" :fill="b.black ? '#000' : '#4f81bd'" :stroke="b.black ? '#000' : '#385d8a'" />
            <path v-else :d="`M${b.x + .5} ${b.y}v15`" stroke="#385d8a" />
          </template>
          <path v-for="d in diamonds" :key="d[0]" :d="`M${d[1] - gx} ${mid(d[0]) - 7.5}l7.500 7.500l-7.500 7.500l-7.500-7.500z`" />
          <g v-for="(l, i) in links" :key="'l' + i"><path :d="l.d" fill="none" stroke="#0000ff" stroke-width="1.100" /><path d="M0 0L-6.500-3.200V3.200z" fill="#0000ff" :transform="l.head" /></g>
        </svg>
        <div class="pick"><i /></div>
      </div>
      <div class="vbar">
        <div class="arrow"><svg width="8" height="5"><path d="M0 5h8L4 0z" fill="#666" /></svg></div>
        <div class="vthumb" /><div class="vtrack" />
        <div class="arrow"><svg width="8" height="5"><path d="M0 0h8L4 5z" fill="#666" /></svg></div>
      </div>
    </section>

    <section class="sheettabs">
      <svg class="nav" width="100" height="24" viewBox="0 0 100 24"><path d="M31 8.500v8l-4.500-4zM55.500 8.500v8l4.500-4z" fill="#b8b8b8" /></svg>
      <span class="st on">Tasks</span><span class="st res">Resources</span><span class="st risk">Risk Register</span>
      <svg class="plus" width="18" height="18" viewBox="0 0 18 18" fill="none" stroke="#777"><circle cx="9" cy="9" r="7.500" /><path d="M5 9h8M9 5v8" stroke-width="2" /></svg>
      <div class="split"><i /><i /><i /></div>
      <div class="hbar">
        <div class="harrow"><svg width="5" height="8"><path d="M5 0v8L0 4z" fill="#666" /></svg></div><div class="hthumb" /><div class="htrack" /><div class="harrow"><svg width="5" height="8"><path d="M0 0v8l5-4z" fill="#666" /></svg></div>
      </div>
    </section>

    <section class="status">
      <span class="ready">Ready</span>
      <svg class="macro" width="14" height="14" viewBox="0 0 14 14"><path d="M3.500 4.500h9v9h-10V7M3.500 7.500h9M5 10h1.500M8 10h1.500M11 10h1M5 12h1.500M8 12h1.500M11 12h1M7 2.500h6v2" fill="none" stroke="#fff" stroke-width="1.200" /><circle cx="3" cy="3" r="3" fill="#fff" /></svg>
      <div class="views">
        <div class="view on"><svg width="14" height="14" viewBox="0 0 14 14"><path d="M.5 .5h13v13H.5zM5 .5v13M9 .5v13M.5 5h13M.5 9h13" fill="none" stroke="#fff" /></svg></div>
        <div class="view"><svg width="14" height="14" viewBox="0 0 14 14"><path d="M.5 .5h13v13H.5zM3.500 2.500h7v9h-7zM5 5h4M5 7h4M5 9h4" fill="none" stroke="#fff" /></svg></div>
        <div class="view"><svg width="14" height="14" viewBox="0 0 14 14"><path d="M.5 .5h13v13H.5z" fill="none" stroke="#fff" /><path d="M1 1h4v7H1zM6 1h3v7H6z" fill="#fff" /></svg></div>
      </div>
      <svg class="zoom" width="122" height="16" viewBox="0 0 122 16"><path d="M0 8h6M114 8h8M118 4v8" stroke="#fff" stroke-width="2" /><path d="M10 7.500h100M60.500 5v5" stroke="#fff" /><path d="M50 2h4v12h-4z" fill="#fff" /></svg>
      <span class="pct">85%</span>
    </section>

    <footer class="taskbar">
      <div class="sys"><svg width="16" height="16" viewBox="0 0 16 16"><path d="M0 2.200L7 1.200V7.600H0zM8 1l8-1v7.600H8zM0 8.500h7V15L0 14zM8 8.500h8V16l-8-1z" fill="#fff" /></svg></div>
      <div class="sys"><svg width="18" height="18" viewBox="0 0 18 18" fill="none" stroke="#fff" stroke-width="1.400"><circle cx="11" cy="7" r="5.500" /><path d="M7 11l-6 6" /></svg></div>
      <div class="sys"><svg width="18" height="18" viewBox="0 0 18 18"><circle cx="9" cy="9" r="7" fill="none" stroke="#fff" stroke-width="2" /></svg></div>
      <div class="sys"><svg width="17" height="16" viewBox="0 0 17 16" fill="none" stroke="#fff" stroke-width="1.300"><path d="M1 4h10v8H1zM1 0v2h10V0M1 16v-2h10v2M14.500 0v4M14.500 9v7" /><path d="M13.500 5h2v3h-2z" fill="#fff" /></svg></div>
      <div class="apps">
        <div v-for="a in apps" :key="a.i" class="appslot" :class="{ on: a.on, active: a.active, multi: a.multi }"><svg width="28" height="28"><use :href="'#' + a.i" /></svg></div>
      </div>
      <div class="tray">
        <svg class="moon" width="20" height="20" viewBox="0 0 20 20"><path d="M12 1q7 4 6 11-3 8-11 7-5-1-6-5 6 1 9-3t2-10z" fill="url(#gy)" /><path d="M12 1q7 4 6 11-3 8-11 7 7-2 8-8 0-6-3-10z" fill="#ffc81a" /></svg>
        <span class="temp">22°C</span><span class="sky">Despejado</span>
        <svg class="ti" width="90" height="20" viewBox="0 0 90 20" fill="none" stroke="#fff" stroke-width="1.300">
          <path d="M5 12l5.500-5.500L16 12" /><path d="M30 6.500h7v8h-7zM37 9l2-1v5l-2-1M30 4q4-3 8 0M30 17q4 3 8 0M33 10.500h1" /><path d="M56 5.500h10v9H52v-5M59 15v2.500M55 18h8M51 3.500h4v4h-4z" /><path d="M74 8h2.500l4-4v12l-4-4H74zM83 7q2 3 0 6M85.500 5q3.500 5 0 10" /><path d="M88 3.500q4 6.500 0 13" stroke="#777" />
        </svg>
        <div class="two lang"><span>ESP</span><span>US</span></div>
        <div class="two clock"><span>1:12 AM</span><span>5/14/2022</span></div>
        <svg class="note" width="34" height="30" viewBox="0 0 34 30"><path d="M4 4h17v13H10l-4 4v-4H4z" fill="#fff" /><path d="M7 7.500h11M7 10.500h11M7 13.500h11" stroke="#111" /><circle cx="20" cy="20" r="9" fill="#444" stroke="#999" /><text x="20" y="24.500" text-anchor="middle" class="ten">10</text></svg>
        <i class="edge" />
      </div>
    </footer>
  </div>
</template>

<style>
html, body { margin: 0; overflow: hidden; background: #fff; }
</style>

<style scoped>
* { box-sizing: border-box; }
.window { position: relative; width: 1920px; height: 1080px; display: flex; flex-direction: column; overflow: hidden; background: #fff; color: #444; font: 12px/16px "Open Sans", "Noto Sans", sans-serif; letter-spacing: -0.36px; white-space: nowrap; }
.defs { position: absolute; }
svg { display: block; flex: none; }
.dd { display: inline-block; border: 3px solid transparent; border-top-color: #777; border-bottom: 0; margin-left: 4px; vertical-align: 2px; }
.fxg { font: italic bold 31px "Liberation Serif", serif; fill: #c9492b; }
.fxs { font: italic bold 23px "Liberation Serif", serif; fill: #c9492b; }
.fxb { font: italic bold 15px "Liberation Serif", serif; fill: #666; }
.fxc { font: italic bold 11px "Liberation Serif", serif; fill: #666; }
.qm { font: bold 17px "Open Sans", sans-serif; fill: #e8eefc; }
.cmdt { font: bold 6px "Liberation Mono", monospace; fill: #ddd; }
.app { font: bold 14px "Open Sans", sans-serif; fill: #fff; }
.nine { font: 10px "Open Sans", sans-serif; fill: #fff; letter-spacing: 0; }
.ten { font: 600 12px "Open Sans", sans-serif; fill: #fff; letter-spacing: -0.5px; }

.title { position: relative; height: 33px; flex: none; display: flex; }
.circuit { position: absolute; right: 0; top: 0; }
.save { width: 46px; height: 31px; margin-left: 4px; background: #d5e1f2; display: flex; align-items: center; justify-content: center; }
.save svg { margin-right: 1px; }
.quick { margin: 3px 0 0 9px; }
.doc { margin: 9px 0 0 723px; width: 134px; letter-spacing: -0.27px; }
.winctl { position: absolute; left: 1745px; top: 5px; }

.tabs { height: 24px; flex: none; display: flex; border-bottom: 1px solid #d5d5d5; position: relative; line-height: 24px; }
.file { width: 59px; height: 24px; background: #217346; color: #fff; text-align: center; line-height: 25px; }
.tab { text-align: center; flex: none; height: 23px; }
.current { width: 61px; border: 1px solid #d5d5d5; border-bottom: 0; background: #fff; color: #217346; height: 24px; line-height: 22px; }
.bulb { margin: 3px 0 0 15px; }
.tell { margin-left: 5px; color: #777; letter-spacing: -0.27px; }
.share { position: absolute; left: 1846px; right: 0; top: 0; height: 23px; line-height: 23px; background: #217346; color: #fff; display: flex; align-items: center; gap: 3px; padding-left: 7px; }

.ribbon { position: relative; height: 93px; flex: none; display: flex; border-bottom: 1px solid #d5d5d5; }
.group { position: relative; height: 84px; margin-top: 4px; border-right: 1px solid #dcdcdc; display: flex; flex-direction: column; flex: none; }
.body { display: flex; height: 72px; flex: none; }
.cap { text-align: center; color: #666; height: 16px; flex: none; letter-spacing: -0.25px; }
.g-model { width: 419px; padding-left: 2px; }
.g-model .cap { margin-left: -4px; }
.g-sim { width: 215px; }
.g-res { width: 202px; padding-left: 3px; }
.g-res .cap { margin-left: -3px; }
.g-tools { width: 261px; padding-left: 5px; }
.g-tools .cap { margin-left: -5px; }
.g-util { width: 229px; }
.btn { flex: none; display: flex; flex-direction: column; align-items: center; padding-top: 1px; }
.btn svg { margin-bottom: 4px; }
.btn span { line-height: 16px; height: 16px; display: flex; align-items: center; }
.btn .dd { margin-left: 3px; }
.btn .only .dd { margin: 0; }
.off { color: #999; }
.start { width: 70px; }
.swap { width: 64px; }
.helpb { width: 50px; }
.rule { width: 1px; height: 55px; margin-top: 5px; background: #dcdcdc; }
.lines { display: flex; flex-direction: column; margin-top: -1px; }
.ln { height: 23px; display: flex; align-items: center; }
.g-sim .lines { width: 143px; padding-left: 4px; }
.g-sim .ln span { width: 74px; letter-spacing: -0.25px; }
.combo { width: 61px; height: 22px; border: 1px solid #ababab; display: flex; align-items: center; justify-content: space-between; padding: 0 4px 0 2px; }
.g-sim .set span { width: 47px; }
.mini { width: 22px; height: 23px; display: flex; align-items: center; justify-content: center; }
.lit { background: #9fd5b7; }
.g-res .rule { margin-left: 6px; }
.rl { margin-left: 7px; }
.rl .ln { gap: 4px; }
.rl .four { gap: 6px; }
.ul { margin-left: 4px; width: 108px; }
.ul .ln { gap: 3px; padding-left: 3px; }
.ul .dd { margin-left: 0; }
.ul .c1 { width: 99px; }
.ul .c2 { width: 104px; }
.ul .c1 .dd, .ul .c2 .dd { margin: 0 4px 0 auto; border-top-color: #444; }
.fold { position: absolute; right: 10px; bottom: 5px; }

.formula { display: flex; height: 46px; padding: 10px 0 10px 5px; flex: none; }
.fbox { border: 1px solid #c6c6c6; height: 26px; display: flex; align-items: center; flex: none; }
.name { width: 102px; padding: 0 6px 0 7px; justify-content: space-between; }
.name .dd { border-width: 4px; border-bottom: 0; }
.grip { width: 30px; display: flex; flex-direction: column; align-items: center; gap: 2px; padding-top: 8px; }
.grip i { width: 2px; height: 2px; background: #aaa; }
.ops { width: 110px; }
.input { width: 1666px; margin-left: 3px; padding: 0 4px 0 11px; justify-content: space-between; font: 13.500px/24px "Noto Sans", sans-serif; letter-spacing: -0.18px; color: #333; background: #fdfdfd; }

.sheetwrap { height: 795px; flex: none; display: flex; border-bottom: 1px solid #ababab; }
.sheet { position: relative; width: 1899px; height: 794px; overflow: hidden; border-right: 1px solid #ababab; display: flex; flex-direction: column; }
.row { display: flex; flex: none; }
.heads { height: 16px; border-bottom: 1px solid #a0a0a0; }
.corner { width: 23px; padding: 4px 0 0 11px; border-right: 1px solid #d9d9d9; }
.ch { position: relative; flex: none; border-right: 1px solid #d9d9d9; text-align: center; padding-left: 1px; font: 11px/14px "Noto Sans", sans-serif; color: #555; }
.ch.sel { background: #e1e1e1; color: #217346; border-bottom: 2px solid #217346; height: 16px; }
.ch.tight { border-right: 0; }
.ch.tight::after { content: ""; position: absolute; right: -2px; top: 0; width: 5px; height: 15px; border: 1px solid #d0d0d0; border-width: 0 1px; background: #fff; z-index: 1; }
.first { height: 34px; border-bottom: 1px solid #9b9b9b; }
.rh { width: 23px; flex: none; border-right: 1px solid #9b9b9b; border-bottom: 1px solid #dedede; color: #555; text-align: center; display: flex; align-items: flex-end; justify-content: center; padding-right: 1px; font: 11.500px/14px "Noto Sans", sans-serif; letter-spacing: -0.7px; }
.rh.cur { background: #e1e1e1; color: #217346; border-right: 2px solid #217346; padding-right: 0; }
.hc { flex: none; display: flex; align-items: flex-end; justify-content: center; padding-right: 2px; font: bold 10px/12px "Noto Sans", sans-serif; letter-spacing: -0.42px; color: #000; }
.first .rh { border-bottom: 0; }
.gray { background: #bfbfbf; }
.hc.date { justify-content: flex-start; padding: 0 0 0 2px; font: bold 12px/12px "Liberation Sans", sans-serif; letter-spacing: 0.1px; }
.c { flex: none; height: 100%; border-right: 1px solid #d4d4d4; border-bottom: 1px solid #d4d4d4; overflow: hidden; display: flex; align-items: flex-end; padding-left: 2px; }
.task { height: 22px; font: 10px/12px "Noto Sans", sans-serif; letter-spacing: 0; color: #000; }
.mode { letter-spacing: -0.03px; }
.dur { letter-spacing: 0.15px; }
.cost { letter-spacing: -0.3px; }
.task.bold .c { font-weight: bold; letter-spacing: -0.38px; }
.task.bold .taskname { letter-spacing: -0.43px; }
.blank { height: 14px; }
.task .id, .task.bold .id { width: 22px; background: #bfbfbf; border-color: #bfbfbf; justify-content: flex-end; padding: 0 2px 0 0; font-weight: 500; letter-spacing: 0; }
.w85 { width: 85px; }
.w58 { width: 58px; }
.w55 { width: 55px; }
.taskname { width: 218px; }
.fz { border-right: 1px solid #9b9b9b !important; }
.lv1 { padding-left: 18px; }
.lv2 { padding-left: 34px; }
.lv3 { padding-left: 50px; }
.blue { background: #0000ff; border-color: #0000ff; color: #fff; box-shadow: 0 -1px 0 #0000ff; position: relative; }
.red { background: #dc143c; border-color: #dc143c; color: #fff; }
.gantt { position: absolute; left: 858px; top: 50px; }
.pick { position: absolute; left: 771px; top: 48px; width: 88px; height: 25px; border: 2px solid #217346; box-shadow: inset 0 0 0 1px #fff; }
.pick i { position: absolute; right: -3px; bottom: -3px; width: 5px; height: 5px; background: #217346; outline: 1px solid #fff; }

.vbar { width: 21px; padding: 0 4px 0 3px; display: flex; flex-direction: column; background: #fff; }
.arrow { height: 15px; border: 1px solid #ababab; display: flex; align-items: center; justify-content: center; }
.vthumb { height: 739px; margin-top: 2px; border: 1px solid #ababab; }
.vtrack { height: 23px; background: #f0f0f0; }

.sheettabs { height: 27px; flex: none; background: #f4f4f4; display: flex; position: relative; font-size: 13px; line-height: 24px; letter-spacing: -0.4px; }
.st { text-align: center; }
.on { font-weight: bold; }
.st.on { width: 59px; height: 24px; background: #fff; color: #217346; border-bottom: 2px solid #217346; letter-spacing: -0.65px; box-shadow: 1px 0 0 #ababab, -1px 0 0 #ababab; }
.st.res { width: 85px; padding-right: 2px; }
.st.risk { width: 102px; }
.st.res, .st.risk { border-right: 1px solid #ababab; height: 24px; }
.plus { margin: 4px 0 0 32px; }
.split { position: absolute; left: 1139px; width: 28px; height: 27px; background: #fff; display: flex; flex-direction: column; align-items: center; gap: 2px; padding-top: 8px; }
.split i { width: 2px; height: 2px; background: #999; }
.hbar { position: absolute; left: 1169px; top: 6px; height: 15px; display: flex; background: #e8e8e8; }
.harrow { width: 15px; border: 1px solid #ababab; background: #fff; display: flex; align-items: center; justify-content: center; }
.hthumb { width: 671px; border: 1px solid #ababab; background: #fff; }
.htrack { width: 27px; }

.status { height: 22px; flex: none; background: #217346; color: #fff; display: flex; align-items: center; line-height: 22px; position: relative; }
.ready { width: 58px; padding-left: 7px; }
.views { display: flex; position: absolute; left: 1627px; }
.view { width: 38px; height: 22px; display: flex; align-items: center; justify-content: center; }
.view.on { background: #0a6332; }
.zoom { position: absolute; left: 1747px; }
.pct { position: absolute; left: 1884px; letter-spacing: -0.9px; }

.taskbar { height: 40px; flex: none; background: #101010; display: flex; color: #fff; }
.sys { width: 48px; display: flex; align-items: center; justify-content: center; }
.apps { display: flex; margin-left: 2px; }
.appslot { width: 49px; position: relative; display: flex; align-items: center; justify-content: center; }
.appslot.on::after { content: ""; position: absolute; left: 5px; right: 4px; bottom: 0; height: 2px; background: #76b9ff; }
.appslot.active { background: linear-gradient(#333, #333) center / 48px 40px no-repeat; }
.appslot.active::after { left: 0; right: 0; }
.appslot.multi::after { background: linear-gradient(90deg, #76b9ff 31px, #4f7fb0 31px); }
.tray { display: flex; flex: 1; align-items: center; position: relative; font-size: 15px; letter-spacing: -0.8px; }
.moon { margin-left: 402px; }
.temp { margin-left: 9px; width: 38px; }
.sky { width: 78px; }
.ti { margin-right: 9px; }
.two { display: flex; flex-direction: column; align-items: center; font-size: 12px; line-height: 17px; letter-spacing: -0.5px; }
.lang { width: 24px; }
.clock { width: 54px; margin-left: 12px; letter-spacing: -0.35px; }
.note { position: absolute; right: 12px; top: 7px; }
.edge { position: absolute; right: 4px; top: 0; bottom: 0; width: 1px; background: #555; }
</style>
